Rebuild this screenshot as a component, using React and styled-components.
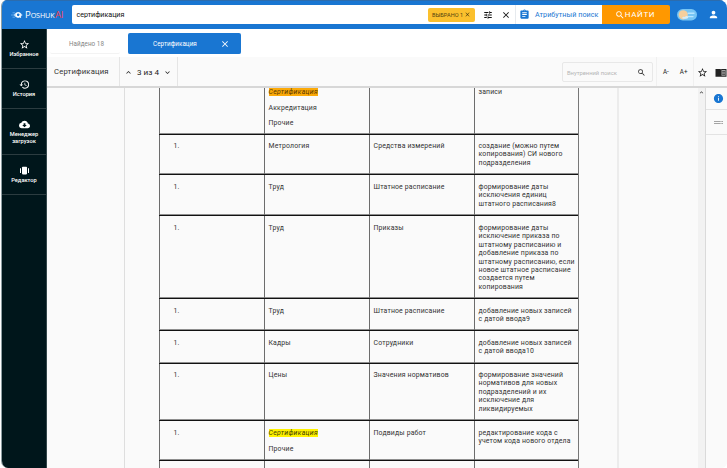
import React from 'react';
import styled, { createGlobalStyle, css } from 'styled-components';
import {
  MdStarBorder, MdHistory, MdCloudDownload, MdTune, MdClose,
  MdAssignment, MdSearch, MdPerson, MdInfo, MdExpandLess,
  MdExpandMore,
} from 'react-icons/md';

const Global = createGlobalStyle`
  * { box-sizing: border-box; }
  body { margin: 0; background: #fff; overflow: hidden; font-family: Roboto, "Liberation Sans", sans-serif; }
  svg { display: block; flex: none; }
`;

const Frame = styled.div`
  width: 727px;
  height: 468px;
  padding-left: 1px;
  background: #fff;
`;
const Window = styled.div`
  height: 468px;
  display: flex;
  flex-direction: column;
  overflow: hidden;
  border-radius: 6px 8px 6px 7px;
  border-left: 1px solid #8e9fa3;
  background: #fafafa;
`;

const Header = styled.header`
  height: 29px;
  flex: none;
  display: flex;
  align-items: flex-start;
  padding-top: 4px;
  background: #1976d2;
  border-top: 1px solid #2c6cad;
`;
const Brand = styled.div`
  width: 70px;
  height: 19px;
  padding-left: 9px;
  display: flex;
  align-items: center;
  color: #fff;
`;
const BrandName = styled.span`
  margin-left: 2px;
  font: 500 9.6px/19px "Open Sans", Roboto, sans-serif;
  letter-spacing: -0.1px;
  white-space: nowrap;
  small { font-size: 7.2px; letter-spacing: -0.15px; }
  b { font-weight: 500; color: #f0414f; margin-left: 0.5px; }
`;
const SearchBar = styled.div`
  width: 530px;
  height: 19px;
  display: flex;
  align-items: center;
  background: #fff;
  border-radius: 2px 0 0 2px;
  color: #111;
`;
const Query = styled.span`
  width: 356px;
  padding-left: 4.5px;
  font-size: 7.2px;
  letter-spacing: -0.05px;
`;
const Chip = styled.span`
  width: 47px;
  height: 14px;
  display: flex;
  align-items: center;
  justify-content: space-between;
  padding: 0 4px;
  border-radius: 2px;
  background: #fbc02d;
  color: #54440f;
  font-size: 5.6px;
  white-space: nowrap;
`;
const BarIcons = styled.div`
  width: 41px;
  height: 19px;
  display: flex;
  align-items: center;
  padding-left: 8px;
  gap: 8px;
  border-right: 1px solid #e6eaee;
`;
const AttributeLink = styled.div`
  display: flex;
  align-items: center;
  padding-left: 3px;
  gap: 5px;
  color: #1976d2;
  font-size: 7.2px;
  letter-spacing: 0.05px;
  white-space: nowrap;
`;
const FindButton = styled.button`
  width: 68px;
  height: 19px;
  margin: 0;
  padding: 0 2px 0 0;
  border: 0;
  border-radius: 0 2px 2px 0;
  display: flex;
  align-items: center;
  justify-content: center;
  gap: 0;
  background: #ff9800;
  color: #fff;
  font: 400 8px Roboto, sans-serif;
  letter-spacing: 0.65px;
`;
const Account = styled.div`
  height: 19px;
  display: flex;
  align-items: center;
  gap: 11px;
  padding-left: 7px;
  color: #fff;
`;

const Body = styled.div`
  flex: 1;
  min-height: 0;
  display: flex;
`;
const Sidebar = styled.nav`
  width: 45px;
  flex: none;
  background: #00161b;
  border-right: 1px solid #33474b;
`;
const NavItem = styled.div`
  height: ${(p) => p.$h}px;
  padding-top: 10px;
  display: flex;
  flex-direction: column;
  align-items: center;
  border-bottom: 1px solid #2c3c40;
  color: #fff;
  font: 500 5.7px/7px Roboto, sans-serif;
  text-align: center;
  white-space: pre-line;
  svg { margin-bottom: 1px; }
`;

const Main = styled.main`
  flex: 1;
  min-width: 0;
  display: flex;
  flex-direction: column;
`;
const Tabs = styled.div`
  height: 28px;
  flex: none;
  padding: 4px 0 3px 3px;
  display: flex;
  gap: 8px;
  background: #fff;
`;
const Tab = styled.div`
  width: ${(p) => (p.$active ? 113 : 70)}px;
  height: 21px;
  display: flex;
  align-items: center;
  justify-content: space-between;
  border-radius: 2px;
  font-size: 6.3px;
  letter-spacing: 0.05px;
  padding: ${(p) => (p.$active ? '1px 11px 0 25px' : '1px 0 0 19px')};
  background: ${(p) => (p.$active ? '#1976d2' : '#fff')};
  color: ${(p) => (p.$active ? '#fff' : '#858585')};
  border-bottom: 1px solid ${(p) => (p.$active ? '#1976d2' : '#f3f3f3')};
`;
const Toolbar = styled.div`
  height: 31px;
  flex: none;
  display: flex;
  align-items: center;
  background: #fafafa;
  border-bottom: 2px solid #d7d7d7;
`;
const DocTitle = styled.div`
  width: 73px;
  height: 29px;
  padding-left: 7px;
  font-size: 7.7px;
  line-height: 30px;
  letter-spacing: 0.16px;
  color: #333;
  border-right: 1px solid #e5e5e5;
`;
const Matches = styled.div`
  width: 58px;
  height: 29px;
  padding: 1px 5px 0 4px;
  display: flex;
  align-items: center;
  justify-content: space-between;
  border-right: 1px solid #e5e5e5;
  color: #222;
  font-size: 8.1px;
  white-space: nowrap;
`;
const InnerSearch = styled.div`
  width: 91px;
  height: 20px;
  margin-left: auto;
  padding: 2px 6px 0 4px;
  display: flex;
  align-items: center;
  justify-content: space-between;
  border: 1px solid #e8e8e8;
  border-radius: 2px;
  color: #b5b5b5;
  font-size: 5.8px;
  svg { color: #222; }
`;
const Tools = styled.div`
  width: 74px;
  height: 29px;
  display: flex;
  align-items: center;
  color: #222;
  font-size: 6.3px;
`;
const Sizes = styled.div`
  width: 40px;
  height: 29px;
  margin-left: 3px;
  display: flex;
  align-items: center;
  gap: 11px;
  padding-left: 6px;
  border-left: 1px solid #f0f0f0;
  border-right: 1px solid #f0f0f0;
`;
const ToolIcons = styled.div`
  display: flex;
  align-items: center;
  gap: 7px;
  padding: 2px 0 0 3px;
`;

const Reader = styled.div`
  flex: 1;
  min-height: 0;
  display: flex;
  overflow: hidden;
`;
const Canvas = styled.div`
  width: 651px;
  flex: none;
  display: flex;
  justify-content: flex-start;
  padding-left: 77px;
  overflow: hidden;
`;
const Page = styled.div`
  width: 495px;
  height: 381px;
  padding-left: 34px;
  border-left: 1px solid #dedede;
  border-right: 2px solid #ececec;
  overflow: hidden;
`;
const Table = styled.div`
  width: 420px;
  border-right: 1px solid #777;
`;
const Row = styled.div`
  height: ${(p) => p.$h}px;
  display: grid;
  grid-template-columns: 105px 105px 105px 104px;
  ${(p) => !p.$first && css`
    border-top: 1px solid #111;
    box-shadow: 0 -1px 0 #8e8e8e;
  `}
`;
const Cell = styled.div`
  padding: ${(p) => p.$pt}px 0 0 ${(p) => (p.$number ? 13.5 : 3.5)}px;
  border-left: 1px solid #6c6c6c;
  font-size: 6.9px;
  line-height: 8.4px;
  letter-spacing: 0.16px;
  color: #333;
  white-space: pre;
  overflow: hidden;
`;
const Paragraph = styled.div`
  height: 15.7px;
`;
const Mark = styled.em`
  display: inline-block;
  height: 8px;
  line-height: 8px;
  letter-spacing: 0.3px;
  background: ${(p) => (p.$current ? '#fba908' : '#fff200')};
  color: ${(p) => (p.$current ? '#5c3900' : '#424000')};
`;
const ScrollTrack = styled.div`
  width: 8px;
  flex: none;
  padding-top: 1px;
  background: #f2f2f2;
  color: #444;
  border-right: 1px solid #dadada;
`;
const Rail = styled.div`
  flex: 1;
  background: #fafafa;
`;
const RailItem = styled.div`
  height: ${(p) => p.$h}px;
  padding-left: 3px;
  display: flex;
  align-items: center;
  justify-content: center;
  border-bottom: 1px solid #e3e3e3;
  color: #1976d2;
`;

const LogoMark = () => (
  <svg width="12" height="10" viewBox="0 0 12 10" fill="none">
    <path d="M1.5 2.8H4M0 5H3M1.5 7.2H4" stroke="#5fa5e8" strokeWidth="1" />
    <path d="M2.6 5Q7 -1 11.6 5Q7 11 2.6 5Z" fill="#b4d8fa" />
    <circle cx="7.2" cy="4.8" r="2" fill="#1976d2" stroke="#fff" strokeWidth="1.3" />
    <path d="M8.3 6L9.8 7.6" stroke="#fff" strokeWidth="1.2" />
  </svg>
);
const ThemeToggle = () => (
  <svg width="20" height="12" viewBox="0 0 20 12">
    <rect width="20" height="11.5" rx="5.7" fill="#76c5f5" />
    <path d="M11 4.2H17M10 7.6H16" stroke="#b9e6ff" strokeWidth="1.4" strokeLinecap="round" />
    <circle cx="6.2" cy="5.8" r="4.6" fill="#f5cf9d" />
    <path d="M5 9.1Q6 7.2 8 8Q9 6.2 11 7.8Q12 9.3 9 9.7H6Z" fill="#d4ecf7" />
  </svg>
);
const EditorIcon = () => (
  <svg width="11" height="11" viewBox="0 0 11 11" fill="#fff">
    <rect x="3" y="1.8" width="5" height="7.6" rx="0.8" />
    <path d="M1 3.2H2V8H1ZM9 3.2H10V8H9Z" />
  </svg>
);
const BookIcon = () => (
  <svg width="12" height="10" viewBox="0 0 12 10">
    <path d="M0.5 1H5.4L6 1.5L6.6 1H11.5V8.8H0.5Z" fill="#222" />
    <path d="M6.5 2H10.6V7.8H6.5Z" fill="#a5a5a5" />
    <path d="M7.2 3.5H10M7.2 5H10M7.2 6.5H10" stroke="#333" strokeWidth="0.7" />
  </svg>
);
const Lines = () => (
  <svg width="9" height="5" viewBox="0 0 9 5">
    <path d="M0 1.5H9M0 3.5H9" stroke="#a4a4a4" strokeWidth="1" />
    <path d="M7 1V4" stroke="#fafafa" strokeWidth="0.6" />
  </svg>
);

const nav = [
  { icon: MdStarBorder, label: 'Избранное', h: 40 },
  { icon: MdHistory, label: 'История', h: 40 },
  { icon: MdCloudDownload, label: 'Менеджер\nзагрузок', h: 46 },
  { icon: EditorIcon, label: 'Редактор', h: 40 },
];

const rows = [
  { h: 40, pt: 7, topic: 'Метрология', kind: 'Средства измерений', text: 'создание (можно путем\nкопирования) СИ нового\nподразделения' },
  { h: 41, pt: 8, topic: 'Труд', kind: 'Штатное расписание', text: 'формирование даты\nисключения единиц\nштатного расписания8' },
  { h: 83, pt: 8, topic: 'Труд', kind: 'Приказы', text: 'формирование даты\nисключение приказа по\nштатному расписанию и\nдобавление приказа по\nштатному расписанию, если\nновое штатное расписание\nсоздается путем\nкопирования' },
  { h: 32, pt: 7.5, topic: 'Труд', kind: 'Штатное расписание', text: 'добавление новых записей\nс датой ввода9' },
  { h: 33, pt: 8, topic: 'Кадры', kind: 'Сотрудники', text: 'добавление новых записей\nс датой ввода10' },
  { h: 57, pt: 7, topic: 'Цены', kind: 'Значения нормативов', text: 'формирование значений\nнормативов для новых\nподразделений и их\nисключение для\nликвидируемых' },
  { h: 40, pt: 8, marked: true, topic: 'Прочие', kind: 'Подвиды работ', text: 'редактирование кода с\nучетом кода нового отдела' },
];

export default function App() {
  return (
    <Frame>
      <Global />
      <Window>
        <Header>
          <Brand>
            <LogoMark />
            <BrandName>P<small>OSHUK</small><b>AI</b></BrandName>
          </Brand>
          <SearchBar>
            <Query>сертификация</Query>
            <Chip>ВЫБРАНО 1<MdClose size={7} /></Chip>
            <BarIcons><MdTune size={10} /><MdClose size={10} /></BarIcons>
            <AttributeLink><MdAssignment size={11} />Атрибутный поиск</AttributeLink>
          </SearchBar>
          <FindButton><MdSearch size={10} />НАЙТИ</FindButton>
          <Account><ThemeToggle /><MdPerson size={11} /></Account>
        </Header>
        <Body>
          <Sidebar>
            {nav.map(({ icon: Icon, label, h }) => (
              <NavItem key={label} $h={h}><Icon size={11} />{label}</NavItem>
            ))}
          </Sidebar>
          <Main>
            <Tabs>
              <Tab>Найдено 18</Tab>
              <Tab $active>Сертификация<MdClose size={10} /></Tab>
            </Tabs>
            <Toolbar>
              <DocTitle>Сертификация</DocTitle>
              <Matches><MdExpandLess size={9} />3 из 4<MdExpandMore size={9} /></Matches>
              <InnerSearch>Внутренний поиск<MdSearch size={9} /></InnerSearch>
              <Tools>
                <Sizes><span>A-</span><span>A+</span></Sizes>
                <ToolIcons><MdStarBorder size={11} /><BookIcon /></ToolIcons>
              </Tools>
            </Toolbar>
            <Reader>
              <Canvas>
                <Page>
                  <Table>
                    <Row $h={46} $first>
                      <Cell />
                      <Cell $pt={0}>
                        <Paragraph><Mark $current>Сертификация</Mark></Paragraph>
                        <Paragraph>Аккредитация</Paragraph>
                        <Paragraph>Прочие</Paragraph>
                      </Cell>
                      <Cell />
                      <Cell $pt={0}>записи</Cell>
                    </Row>
                    {rows.map((r, i) => (
                      <Row key={i} $h={r.h}>
                        <Cell $pt={r.pt} $number>1.</Cell>
                        <Cell $pt={r.pt}>
                          {r.marked && <Paragraph><Mark>Сертификация</Mark></Paragraph>}
                          {r.topic}
                        </Cell>
                        <Cell $pt={r.pt}>{r.kind}</Cell>
                        <Cell $pt={r.pt}>{r.text}</Cell>
                      </Row>
                    ))}
                    <Row $h={40}><Cell /><Cell /><Cell /><Cell /></Row>
                  </Table>
                </Page>
              </Canvas>
              <ScrollTrack><MdExpandLess size={7} /></ScrollTrack>
              <Rail>
                <RailItem $h={22}><MdInfo size={11} /></RailItem>
                <RailItem $h={25}><Lines /></RailItem>
              </Rail>
            </Reader>
          </Main>
        </Body>
      </Window>
    </Frame>
  );
}
